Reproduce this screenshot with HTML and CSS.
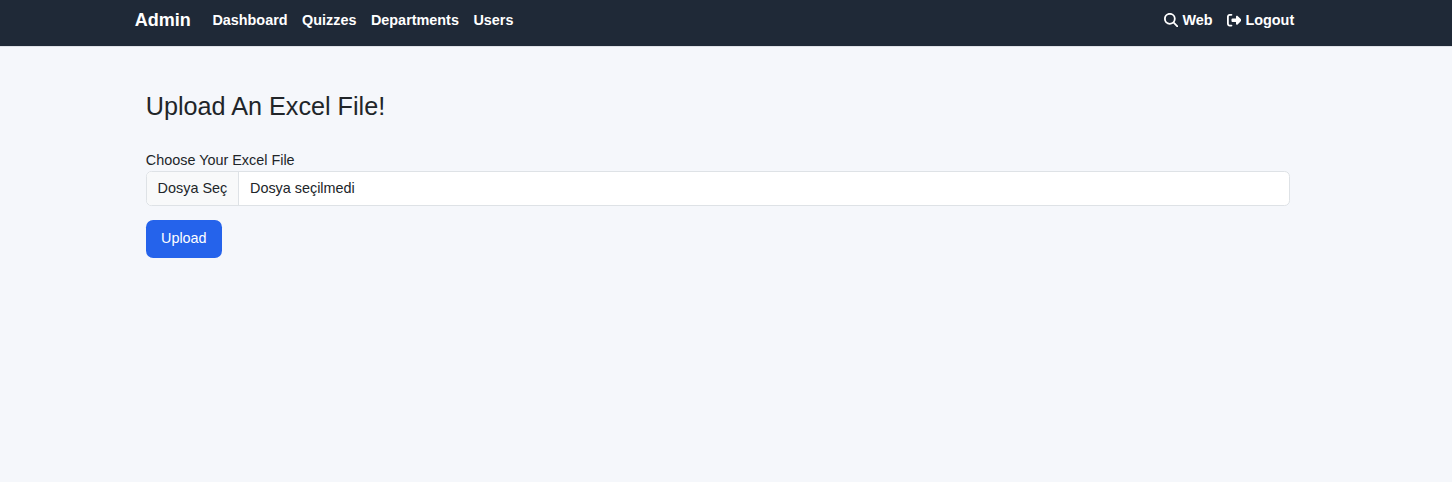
FILE: index.html
```html
<!DOCTYPE html>
<html lang="tr">
<head>
<meta charset="utf-8">
<title>Admin</title>
<link rel="stylesheet" href="styles.css">
</head>
<body>
<header class="navbar">
  <div class="navbar-inner">
    <a class="brand">Admin</a>
    <nav class="links">
      <a>Dashboard</a>
      <a>Quizzes</a>
      <a>Departments</a>
      <a>Users</a>
    </nav>
    <nav class="links links-end">
      <a><svg class="icon" viewBox="0 0 512 512"><path d="M416 208c0 45.900-14.900 88.300-40 122.700L502.600 457.400c12.500 12.500 12.500 32.800 0 45.300s-32.800 12.500-45.300 0L330.700 376c-34.400 25.200-76.800 40-122.700 40C93.100 416 0 322.900 0 208S93.100 0 208 0S416 93.100 416 208zM208 352a144 144 0 1 0 0-288 144 144 0 1 0 0 288z"/></svg> Web</a>
      <a><svg class="icon" viewBox="0 0 512 512"><path d="M377.900 105.900L500.700 228.700c7.200 7.200 11.300 17.100 11.300 27.300s-4.100 20.100-11.300 27.300L377.900 406.100c-6.400 6.400-15 9.900-24 9.900c-18.700 0-33.900-15.200-33.900-33.900l0-62.100-128 0c-17.700 0-32-14.300-32-32l0-64c0-17.700 14.300-32 32-32l128 0 0-62.100c0-18.700 15.200-33.900 33.900-33.900c9 0 17.600 3.600 24 9.900zM160 96L96 96c-17.700 0-32 14.300-32 32l0 256c0 17.700 14.300 32 32 32l64 0c17.700 0 32 14.300 32 32s-14.300 32-32 32l-64 0c-53 0-96-43-96-96L0 128C0 75 43 32 96 32l64 0c17.700 0 32 14.300 32 32s-14.300 32-32 32z"/></svg> Logout</a>
    </nav>
  </div>
</header>
<main class="content">
  <h1 class="title">Upload An Excel File!</h1>
  <form class="form">
    <div class="label">Choose Your Excel File</div>
    <div class="file-input">
      <span class="file-button">Dosya Seç</span>
      <span class="file-name">Dosya seçilmedi</span>
    </div>
    <button class="upload" type="button">Upload</button>
  </form>
</main>
</body>
</html>
```
FILE: styles.css
```css
* {
  box-sizing: border-box;
}

body {
  margin: 0;
  min-height: 482px;
  background: #f5f7fb;
  color: #212529;
  font-family: "Liberation Sans", Arial, sans-serif;
  font-size: 14.4px;
  line-height: 21.6px;
}

.navbar {
  height: 47px;
  background: #1f2937;
  border-bottom: 1px solid #dfe2e8;
}

.navbar-inner {
  display: flex;
  align-items: center;
  height: 41px;
  padding: 0 157.8px 0 134.7px;
  color: #fff;
  font-weight: 700;
}

.brand {
  padding-top: 1px;
  font-size: 18px;
  margin-right: 21.7px;
}

.links {
  display: flex;
  gap: 14.5px;
}

.links-end {
  margin-left: auto;
}

.icon {
  width: 14.4px;
  height: 14.4px;
  fill: currentColor;
  vertical-align: -2.6px;
}

.content {
  padding: 43px 162px 0 145.8px;
}

.title {
  margin: 0 0 28px;
  font-size: 25.2px;
  font-weight: 400;
  line-height: 32px;
}

.form {
  display: flex;
  flex-direction: column;
  align-items: flex-start;
}

.label {
  line-height: 21px;
}

.file-input {
  display: flex;
  width: 100%;
  height: 35px;
  overflow: hidden;
  background: #fff;
  border: 1px solid #dee2e6;
  border-radius: 5.4px;
  line-height: 33px;
}

.file-button {
  padding: 0 10.8px;
  background: #f8f9fa;
  border-right: 1px solid #dee2e6;
}

.file-name {
  padding-left: 11px;
}

.upload {
  width: 76px;
  height: 38px;
  margin-top: 14px;
  padding: 0;
  border: 0;
  border-radius: 7.2px;
  background: #2563eb;
  color: #fff;
  font: inherit;
}
```
